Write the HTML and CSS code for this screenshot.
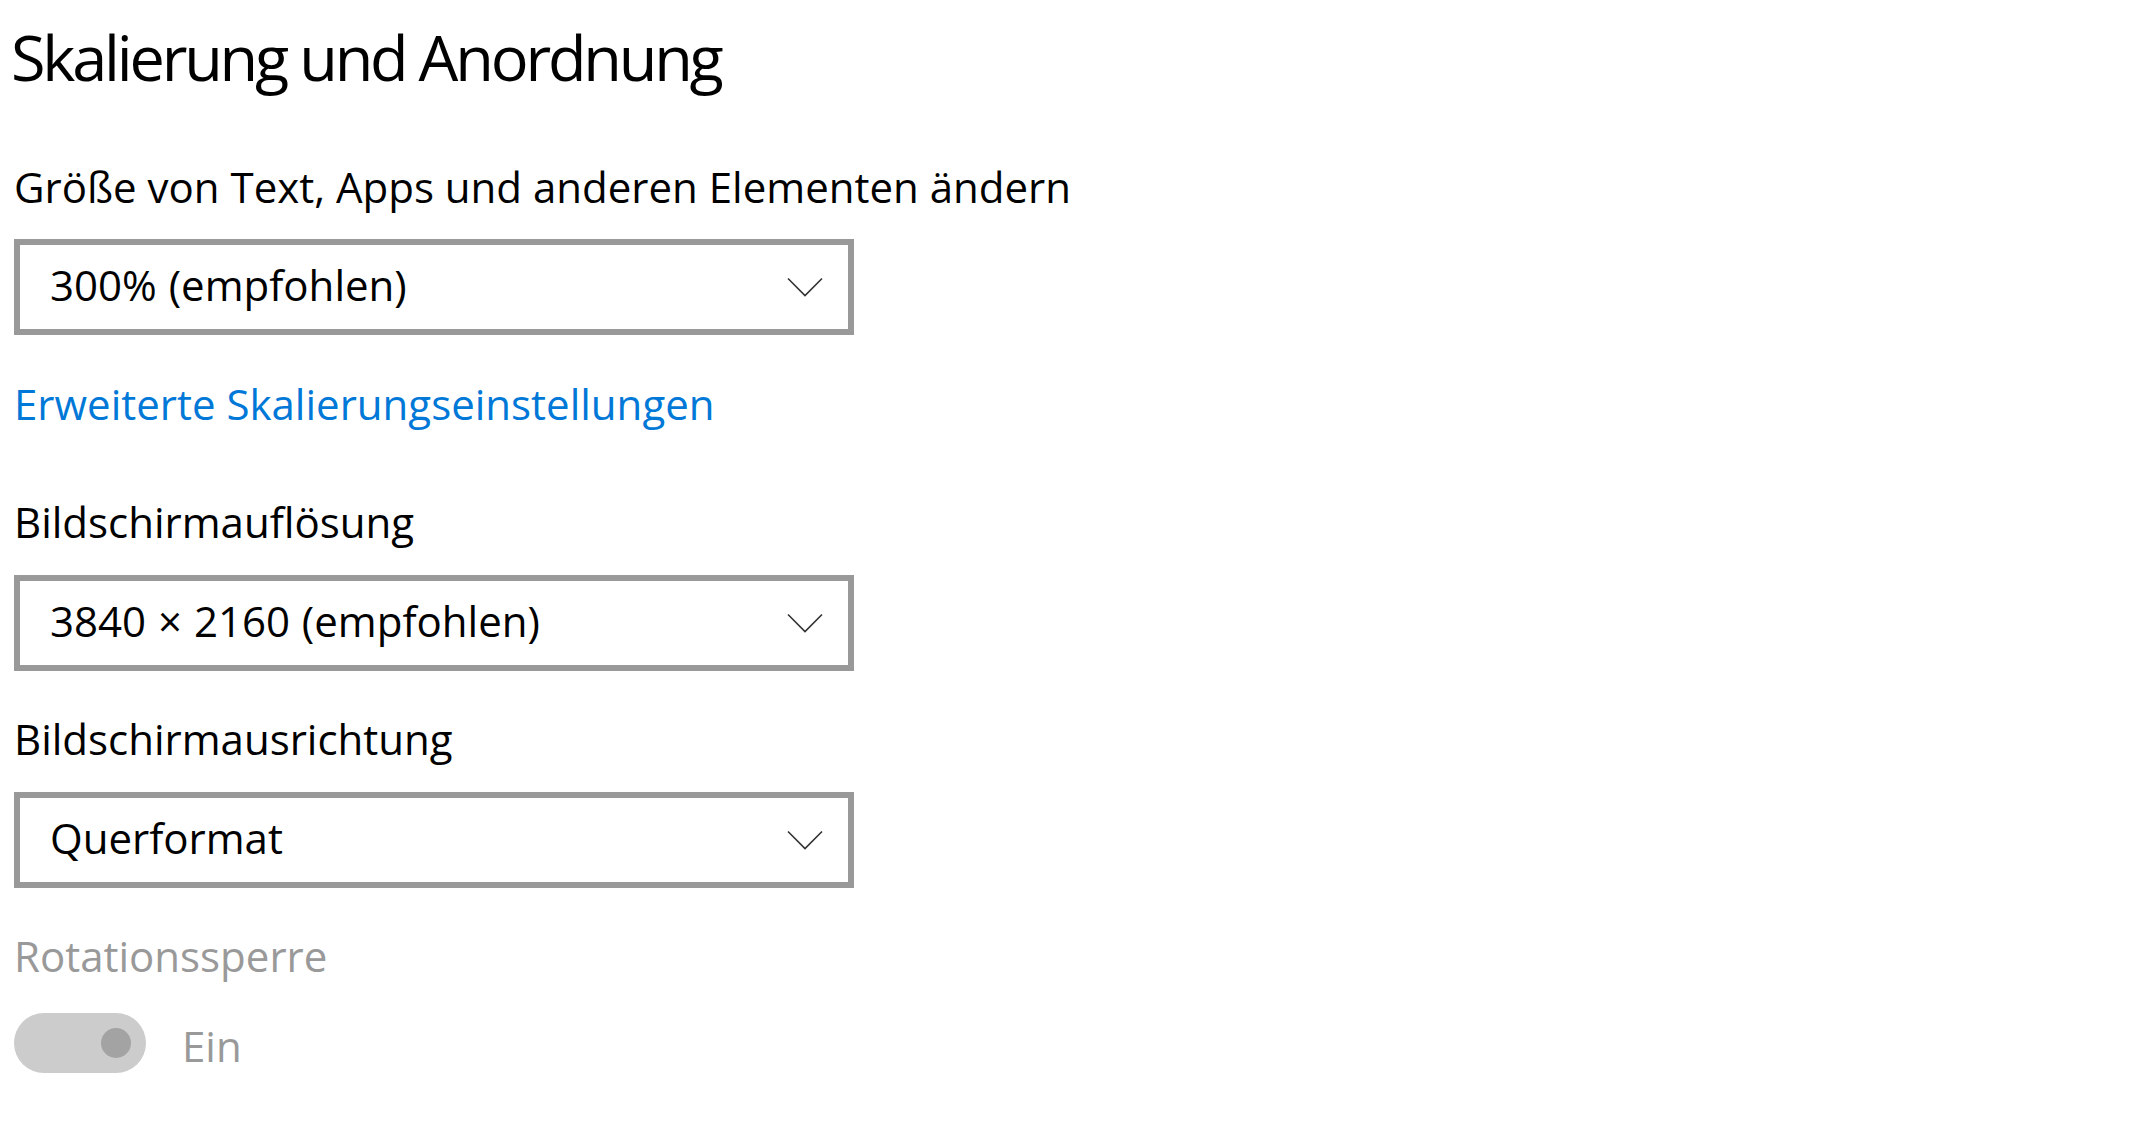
FILE: index.html
```html
<!DOCTYPE html>
<html lang="de">
<head>
<meta charset="utf-8">
<title>Skalierung und Anordnung</title>
<link rel="stylesheet" href="styles.css">
</head>
<body>
<main class="page">
  <h1 class="title">Skalierung und Anordnung</h1>

  <div class="label label-first">Größe von Text, Apps und anderen Elementen ändern</div>
  <div class="select">
    <span class="select-text">300% (empfohlen)</span>
    <svg class="chevron" width="36" height="20" viewBox="0 0 36 20" aria-hidden="true"><polyline points="1,1.5 18,18.5 35,1.5" fill="none" stroke="#333" stroke-width="1.6"/></svg>
  </div>

  <a class="link" href="#">Erweiterte Skalierungseinstellungen</a>

  <div class="label label-after-link">Bildschirmauflösung</div>
  <div class="select">
    <span class="select-text">3840 × 2160 (empfohlen)</span>
    <svg class="chevron" width="36" height="20" viewBox="0 0 36 20" aria-hidden="true"><polyline points="1,1.5 18,18.5 35,1.5" fill="none" stroke="#333" stroke-width="1.6"/></svg>
  </div>

  <div class="label label-after-box">Bildschirmausrichtung</div>
  <div class="select">
    <span class="select-text">Querformat</span>
    <svg class="chevron" width="36" height="20" viewBox="0 0 36 20" aria-hidden="true"><polyline points="1,1.5 18,18.5 35,1.5" fill="none" stroke="#333" stroke-width="1.6"/></svg>
  </div>

  <div class="label label-after-box disabled">Rotationssperre</div>
  <div class="toggle-row">
    <div class="toggle"><div class="knob"></div></div>
    <span class="toggle-label">Ein</span>
  </div>
</main>
</body>
</html>
```

FILE: styles.css
```css
html, body {
  margin: 0;
  padding: 0;
  background: #ffffff;
}

body {
  font-family: "Open Sans", "Noto Sans", sans-serif;
  color: #000000;
}

.page {
  display: flex;
  flex-direction: column;
  align-items: flex-start;
  padding: 15px 0 0 14px;
}

.title {
  margin: 0 0 0 -3px;
  font-size: 63px;
  line-height: 84px;
  font-weight: 400;
  letter-spacing: -3.2px;
}

.label {
  font-size: 42px;
  line-height: 56px;
}

.label-first {
  margin-top: 60px;
}

.label-after-link {
  margin-top: 62px;
}

.label-after-box {
  margin-top: 40px;
}

.disabled {
  color: #999999;
}

.select {
  box-sizing: border-box;
  margin-top: 24px;
  width: 840px;
  height: 96px;
  border: 6px solid #999999;
  background: #ffffff;
  display: flex;
  align-items: flex-start;
  justify-content: space-between;
  padding: 0 25px 0 30px;
}

.label + .select {
  margin-top: 25px;
}

.label-first + .select {
  margin-top: 24px;
}

.select-text {
  font-size: 42px;
  line-height: 80px;
  padding-bottom: 4px;
  word-spacing: 1px;
}

.chevron {
  display: block;
  align-self: center;
}

.link {
  margin-top: 41px;
  font-size: 42px;
  line-height: 56px;
  color: #0078d7;
  text-decoration: none;
}

.toggle-row {
  margin-top: 29px;
  display: flex;
  align-items: flex-start;
  gap: 36px;
}

.toggle {
  box-sizing: border-box;
  width: 132px;
  height: 60px;
  border-radius: 30px;
  background: #cccccc;
  display: flex;
  align-items: center;
  justify-content: flex-end;
  padding-right: 15px;
}

.knob {
  width: 30px;
  height: 30px;
  border-radius: 50%;
  background: #a3a3a3;
}

.toggle-label {
  margin-top: 5px;
  font-size: 42px;
  line-height: 56px;
  color: #999999;
}
```
